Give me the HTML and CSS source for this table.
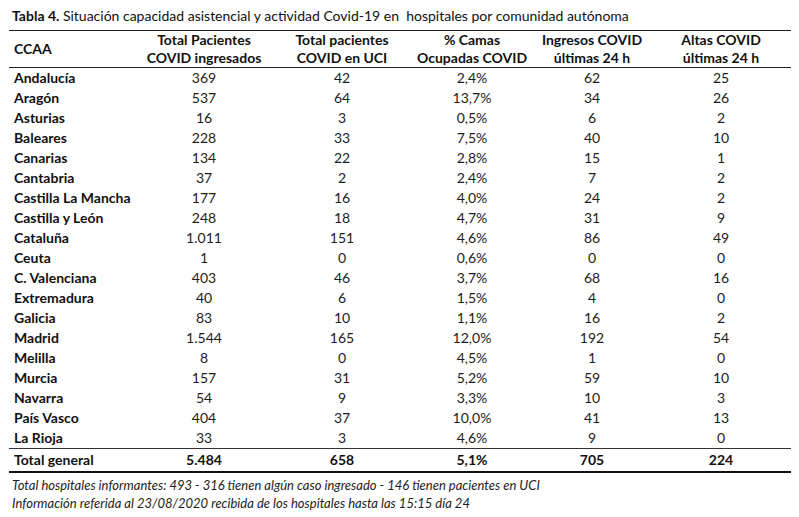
FILE: index.html
```html
<!DOCTYPE html>
<html lang="es">
<head>
<meta charset="utf-8">
<title>Tabla 4</title>
<link rel="stylesheet" href="styles.css">
</head>
<body>
<div class="page">
  <div class="title"><b>Tabla 4.</b> Situación capacidad asistencial y actividad Covid-19 en&nbsp; hospitales por comunidad autónoma</div>
  <table class="data">
    <colgroup>
      <col class="c1"><col class="c2"><col class="c3"><col class="c4"><col class="c5"><col class="c6">
    </colgroup>
    <thead>
      <tr>
        <th class="name">CCAA</th>
        <th>Total Pacientes<br>COVID ingresados</th>
        <th>Total pacientes<br>COVID en UCI</th>
        <th>% Camas<br>Ocupadas COVID</th>
        <th>Ingresos COVID<br>últimas 24 h</th>
        <th>Altas COVID<br>últimas 24 h</th>
      </tr>
    </thead>
    <tbody>
      <tr><td class="name">Andalucía</td><td>369</td><td>42</td><td>2,4%</td><td>62</td><td>25</td></tr>
      <tr><td class="name">Aragón</td><td>537</td><td>64</td><td>13,7%</td><td>34</td><td>26</td></tr>
      <tr><td class="name">Asturias</td><td>16</td><td>3</td><td>0,5%</td><td>6</td><td>2</td></tr>
      <tr><td class="name">Baleares</td><td>228</td><td>33</td><td>7,5%</td><td>40</td><td>10</td></tr>
      <tr><td class="name">Canarias</td><td>134</td><td>22</td><td>2,8%</td><td>15</td><td>1</td></tr>
      <tr><td class="name">Cantabria</td><td>37</td><td>2</td><td>2,4%</td><td>7</td><td>2</td></tr>
      <tr><td class="name">Castilla La Mancha</td><td>177</td><td>16</td><td>4,0%</td><td>24</td><td>2</td></tr>
      <tr><td class="name">Castilla y León</td><td>248</td><td>18</td><td>4,7%</td><td>31</td><td>9</td></tr>
      <tr><td class="name">Cataluña</td><td>1.011</td><td>151</td><td>4,6%</td><td>86</td><td>49</td></tr>
      <tr><td class="name">Ceuta</td><td>1</td><td>0</td><td>0,6%</td><td>0</td><td>0</td></tr>
      <tr><td class="name">C. Valenciana</td><td>403</td><td>46</td><td>3,7%</td><td>68</td><td>16</td></tr>
      <tr><td class="name">Extremadura</td><td>40</td><td>6</td><td>1,5%</td><td>4</td><td>0</td></tr>
      <tr><td class="name">Galicia</td><td>83</td><td>10</td><td>1,1%</td><td>16</td><td>2</td></tr>
      <tr><td class="name">Madrid</td><td>1.544</td><td>165</td><td>12,0%</td><td>192</td><td>54</td></tr>
      <tr><td class="name">Melilla</td><td>8</td><td>0</td><td>4,5%</td><td>1</td><td>0</td></tr>
      <tr><td class="name">Murcia</td><td>157</td><td>31</td><td>5,2%</td><td>59</td><td>10</td></tr>
      <tr><td class="name">Navarra</td><td>54</td><td>9</td><td>3,3%</td><td>10</td><td>3</td></tr>
      <tr><td class="name">País Vasco</td><td>404</td><td>37</td><td>10,0%</td><td>41</td><td>13</td></tr>
      <tr><td class="name">La Rioja</td><td>33</td><td>3</td><td>4,6%</td><td>9</td><td>0</td></tr>
    </tbody>
    <tfoot>
      <tr><td class="name">Total general</td><td>5.484</td><td>658</td><td>5,1%</td><td>705</td><td>224</td></tr>
    </tfoot>
  </table>
  <div class="notes">
    <p>Total hospitales informantes: 493 - 316 tienen algún caso ingresado - 146 tienen pacientes en UCI</p>
    <p>Información referida al 23/08/2020 recibida de los hospitales hasta las 15:15 día 24</p>
  </div>
</div>
</body>
</html>
```
FILE: styles.css
```css
html, body {
  margin: 0;
  padding: 0;
  background: #ffffff;
}
body {
  font-family: Lato, "Liberation Sans", sans-serif;
  color: #1c1c1c;
}
.page {
  width: 782px;
  padding: 7px 0 0 9px;
}
.title {
  font-size: 14px;
  line-height: 18px;
  color: #111;
  padding-left: 3px;
  margin-bottom: 5px;
  white-space: nowrap;
}
.title b {
  font-weight: 700;
}
.data {
  width: 782px;
  border-collapse: collapse;
  table-layout: fixed;
  font-size: 14px;
}
.c1 { width: 126px; }
.c2 { width: 138px; }
.c3 { width: 138px; }
.c4 { width: 122px; }
.c5 { width: 118px; }
.c6 { width: 140px; }
.data thead tr {
  border-top: 1.5px solid #222;
  border-bottom: 1.5px solid #222;
}
.data th {
  font-weight: 700;
  line-height: 18px;
  height: 36px;
  padding: 0;
  text-align: center;
  vertical-align: middle;
  color: #111;
}
.data td {
  height: 20px;
  line-height: 20px;
  padding: 0;
  text-align: center;
  white-space: nowrap;
}
.data .name {
  text-align: left;
  padding-left: 5px;
  font-weight: 700;
  color: #111;
}
.data tfoot tr {
  border-top: 1.5px solid #333;
  border-bottom: 2.5px solid #111;
}
.data tfoot td {
  height: 22px;
  line-height: 22px;
  font-weight: 700;
  color: #111;
}
.notes {
  padding-left: 3px;
  margin-top: 3px;
  font-style: italic;
  font-size: 13px;
  line-height: 18px;
  color: #1c1c1c;
}
.notes p {
  margin: 0;
}
```
